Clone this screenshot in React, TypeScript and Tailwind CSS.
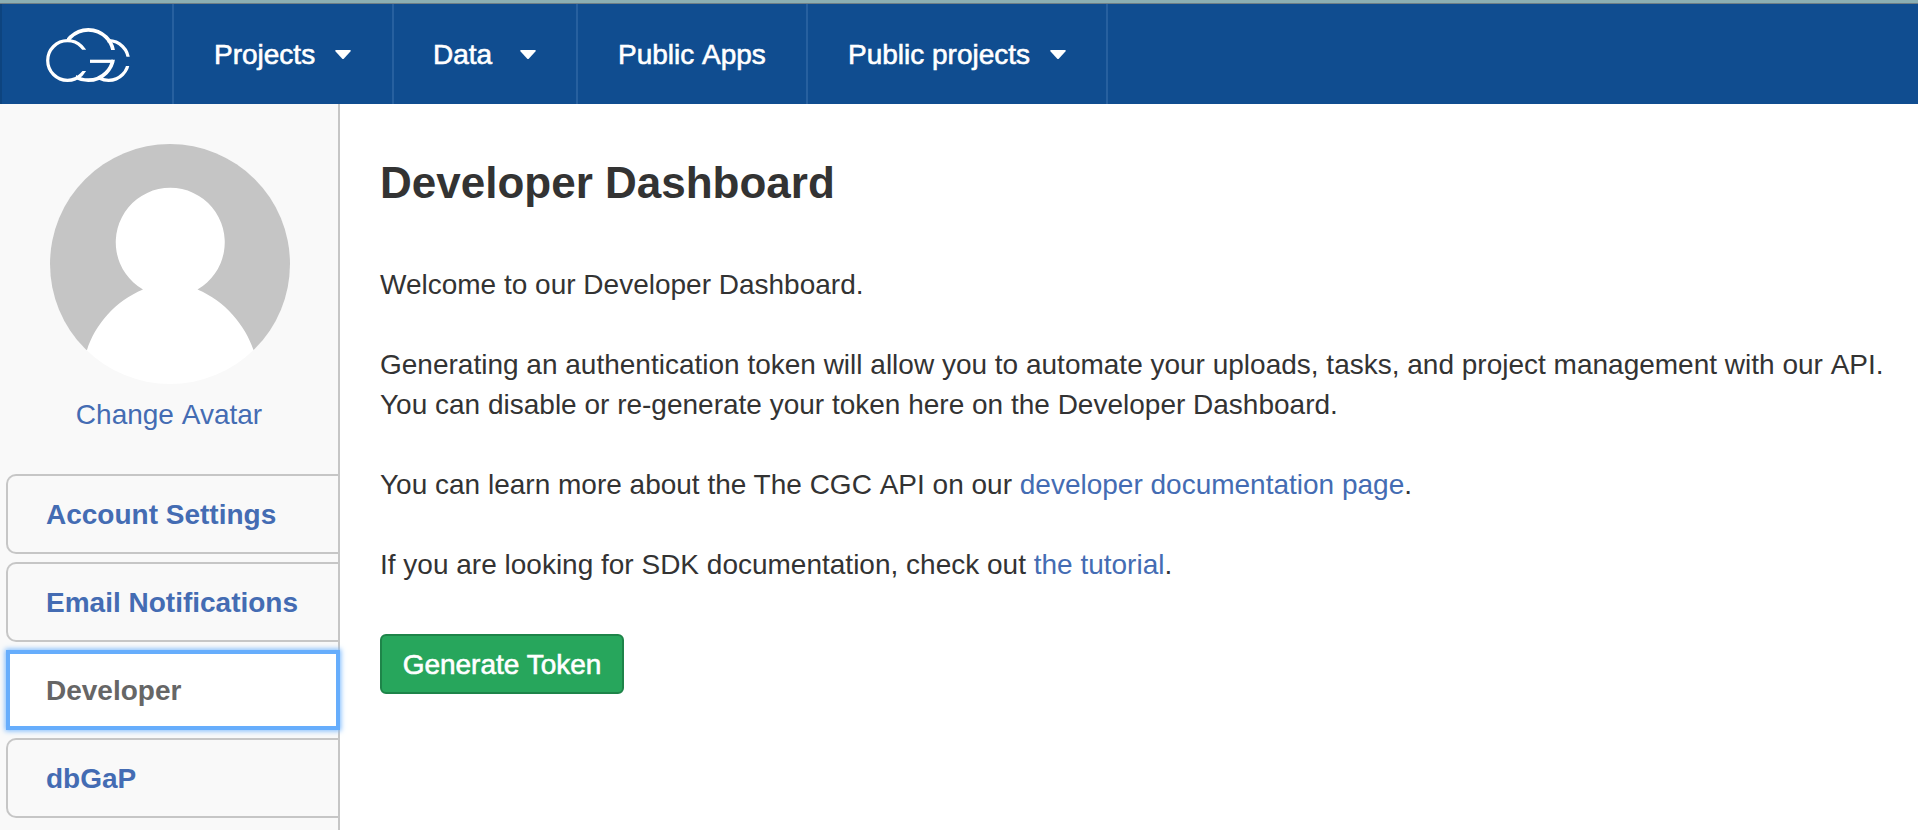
import React from "react";

function CloudLogo() {
  return (
    <svg width="86" height="56" viewBox="45 27 86 56" fill="none" stroke="#fff" strokeWidth="3.2" className="block">
      <defs>
        <clipPath id="logo-left">
          <path d="M45 27H88V49.800H76V71H88V83H45Z" />
        </clipPath>
        <clipPath id="logo-top">
          <path d="M67 27H116V50H100V42H67Z" />
        </clipPath>
        <clipPath id="logo-g">
          <path d="M76 83V70H100V59.700H116V83Z" />
        </clipPath>
        <clipPath id="logo-right">
          <path d="M107.500 27H131V56.800H107.500ZM99 66H131V83H99Z" />
        </clipPath>
      </defs>
      <circle cx="67.500" cy="60.500" r="19.800" clipPath="url(#logo-left)" />
      <circle cx="88.300" cy="55" r="25.200" strokeWidth="3.700" clipPath="url(#logo-top)" />
      <circle cx="88.300" cy="55" r="25.200" strokeWidth="3.700" clipPath="url(#logo-g)" />
      <path d="M90 61.300H113" />
      <circle cx="108.600" cy="60.500" r="19.800" clipPath="url(#logo-right)" />
    </svg>
  );
}

function Caret() {
  return (
    <svg width="16" height="10" viewBox="0 0 16 10" className="block" fill="#fff">
      <path d="M1 0H15Q16.4 0.2 15.4 1.4L9 8.6Q8 9.6 7 8.6L0.6 1.4Q-0.4 0.2 1 0Z" />
    </svg>
  );
}

function NavItem({ children, box, caret }: { children: React.ReactNode; box: string; caret?: string }) {
  return (
    <a className={`flex h-full shrink-0 items-center border-r-2 border-[#27609f] pt-0.5 ${box}`}>
      <span className="text-[28px] leading-10 whitespace-nowrap text-white [-webkit-text-stroke:0.6px_#fff]">{children}</span>
      {caret && (
        <span className={caret}>
          <Caret />
        </span>
      )}
    </a>
  );
}

const sideItems = ["Account Settings", "Email Notifications", "Developer", "dbGaP"];

function SideItem({ label, active }: { label: string; active: boolean }) {
  return (
    <a
      className={
        active
          ? "relative z-10 -mr-0.5 flex h-20 items-center bg-white pt-0.5 pl-10 text-[#666] shadow-[inset_0_0_0_4px_#66adfc,0_0_5px_1px_#7dbbff]"
          : "flex h-20 items-center rounded-l-[10px] border-2 border-r-0 border-[#c6c6c6] pt-0.5 pl-[38px] text-[#446cb3]"
      }
    >
      <span className="text-[28px] leading-10 font-bold">{label}</span>
    </a>
  );
}

export default function App() {
  return (
    <div className="flex h-[830px] w-[1918px] flex-col overflow-hidden bg-white font-['Liberation_Sans',Arial,sans-serif] text-[#333]">
      <div className="h-1 shrink-0 border-b border-[#6f7f86] bg-[#8cafb3]" />
      <nav className="flex h-[100px] shrink-0 border-l-2 border-[#0d447f] bg-[#104d90]">
        <a className="flex h-full w-[172px] shrink-0 items-center border-r-2 border-[#27609f] pt-0.5 pl-[43px]">
          <CloudLogo />
        </a>
        <NavItem box="w-[220px] pl-10" caret="ml-5">Projects</NavItem>
        <NavItem box="w-[184px] pl-[39px]" caret="ml-[28px]">Data</NavItem>
        <NavItem box="w-[230px] pl-10">
          Public <span className="inline-block">Apps</span>
        </NavItem>
        <NavItem box="w-[300px] pl-10" caret="ml-5">Public projects</NavItem>
      </nav>
      <div className="flex min-h-0 flex-1">
        <aside className="w-[340px] shrink-0 border-r-2 border-[#c6c6c6] bg-[#f9f9f9] pt-10">
          <div className="flex flex-col items-center pl-0.5">
            <svg width="240" height="240" viewBox="0 0 240 240" className="block">
              <defs>
                <clipPath id="avatar-body">
                  <circle cx="120" cy="120" r="120" />
                </clipPath>
              </defs>
              <circle cx="120" cy="120" r="120" fill="#fff" />
              <g clipPath="url(#avatar-body)">
                <path
                  fill="#c5c5c5"
                  fillRule="evenodd"
                  d="M0 0H240V206H203.500C195 181 175 157 147.500 145.500A54.500 54.500 0 1 0 93 145.500C65 157 45 181 37 206H0Z"
                />
              </g>
            </svg>
            <a className="mt-[11px] pr-0.5 text-[28px] leading-10 text-[#446cb3]">
              Change <span className="inline-block">Avatar</span>
            </a>
          </div>
          <div className="mt-[39px] flex flex-col gap-2 pl-1.5">
            {sideItems.map((label) => (
              <SideItem key={label} label={label} active={label === "Developer"} />
            ))}
          </div>
        </aside>
        <main className="flex-1 pt-[53px] pl-10 text-[28px] leading-10">
          <h1 className="text-[44px] leading-[52px] font-bold">Developer Dashboard</h1>
          <p className="mt-14 whitespace-nowrap">Welcome to our Developer Dashboard.</p>
          <p className="mt-10 whitespace-nowrap">
            Generating an authentication token will allow you to automate your uploads, tasks, and project management with our{" "}
            <span className="inline-block">API.</span>
            <br />
            You can disable or re-generate your token here on the Developer Dashboard.
          </p>
          <p className="mt-10 whitespace-nowrap">
            You can learn more about the The CGC <span className="inline-block">API</span> on our{" "}
            <a className="text-[#446cb3]">developer documentation page</a>.
          </p>
          <p className="mt-10 whitespace-nowrap">
            If you are looking for SDK documentation, check out <a className="text-[#446cb3]">the tutorial</a>.
          </p>
          <button className="mt-[49px] flex h-[60px] w-[244px] items-center justify-center rounded-md border-2 border-[#1e8449] bg-[#27a65c] pt-0.5 text-[28px] leading-10 whitespace-nowrap text-white [-webkit-text-stroke:0.6px_#fff]">
            Generate Token
          </button>
        </main>
      </div>
    </div>
  );
}
